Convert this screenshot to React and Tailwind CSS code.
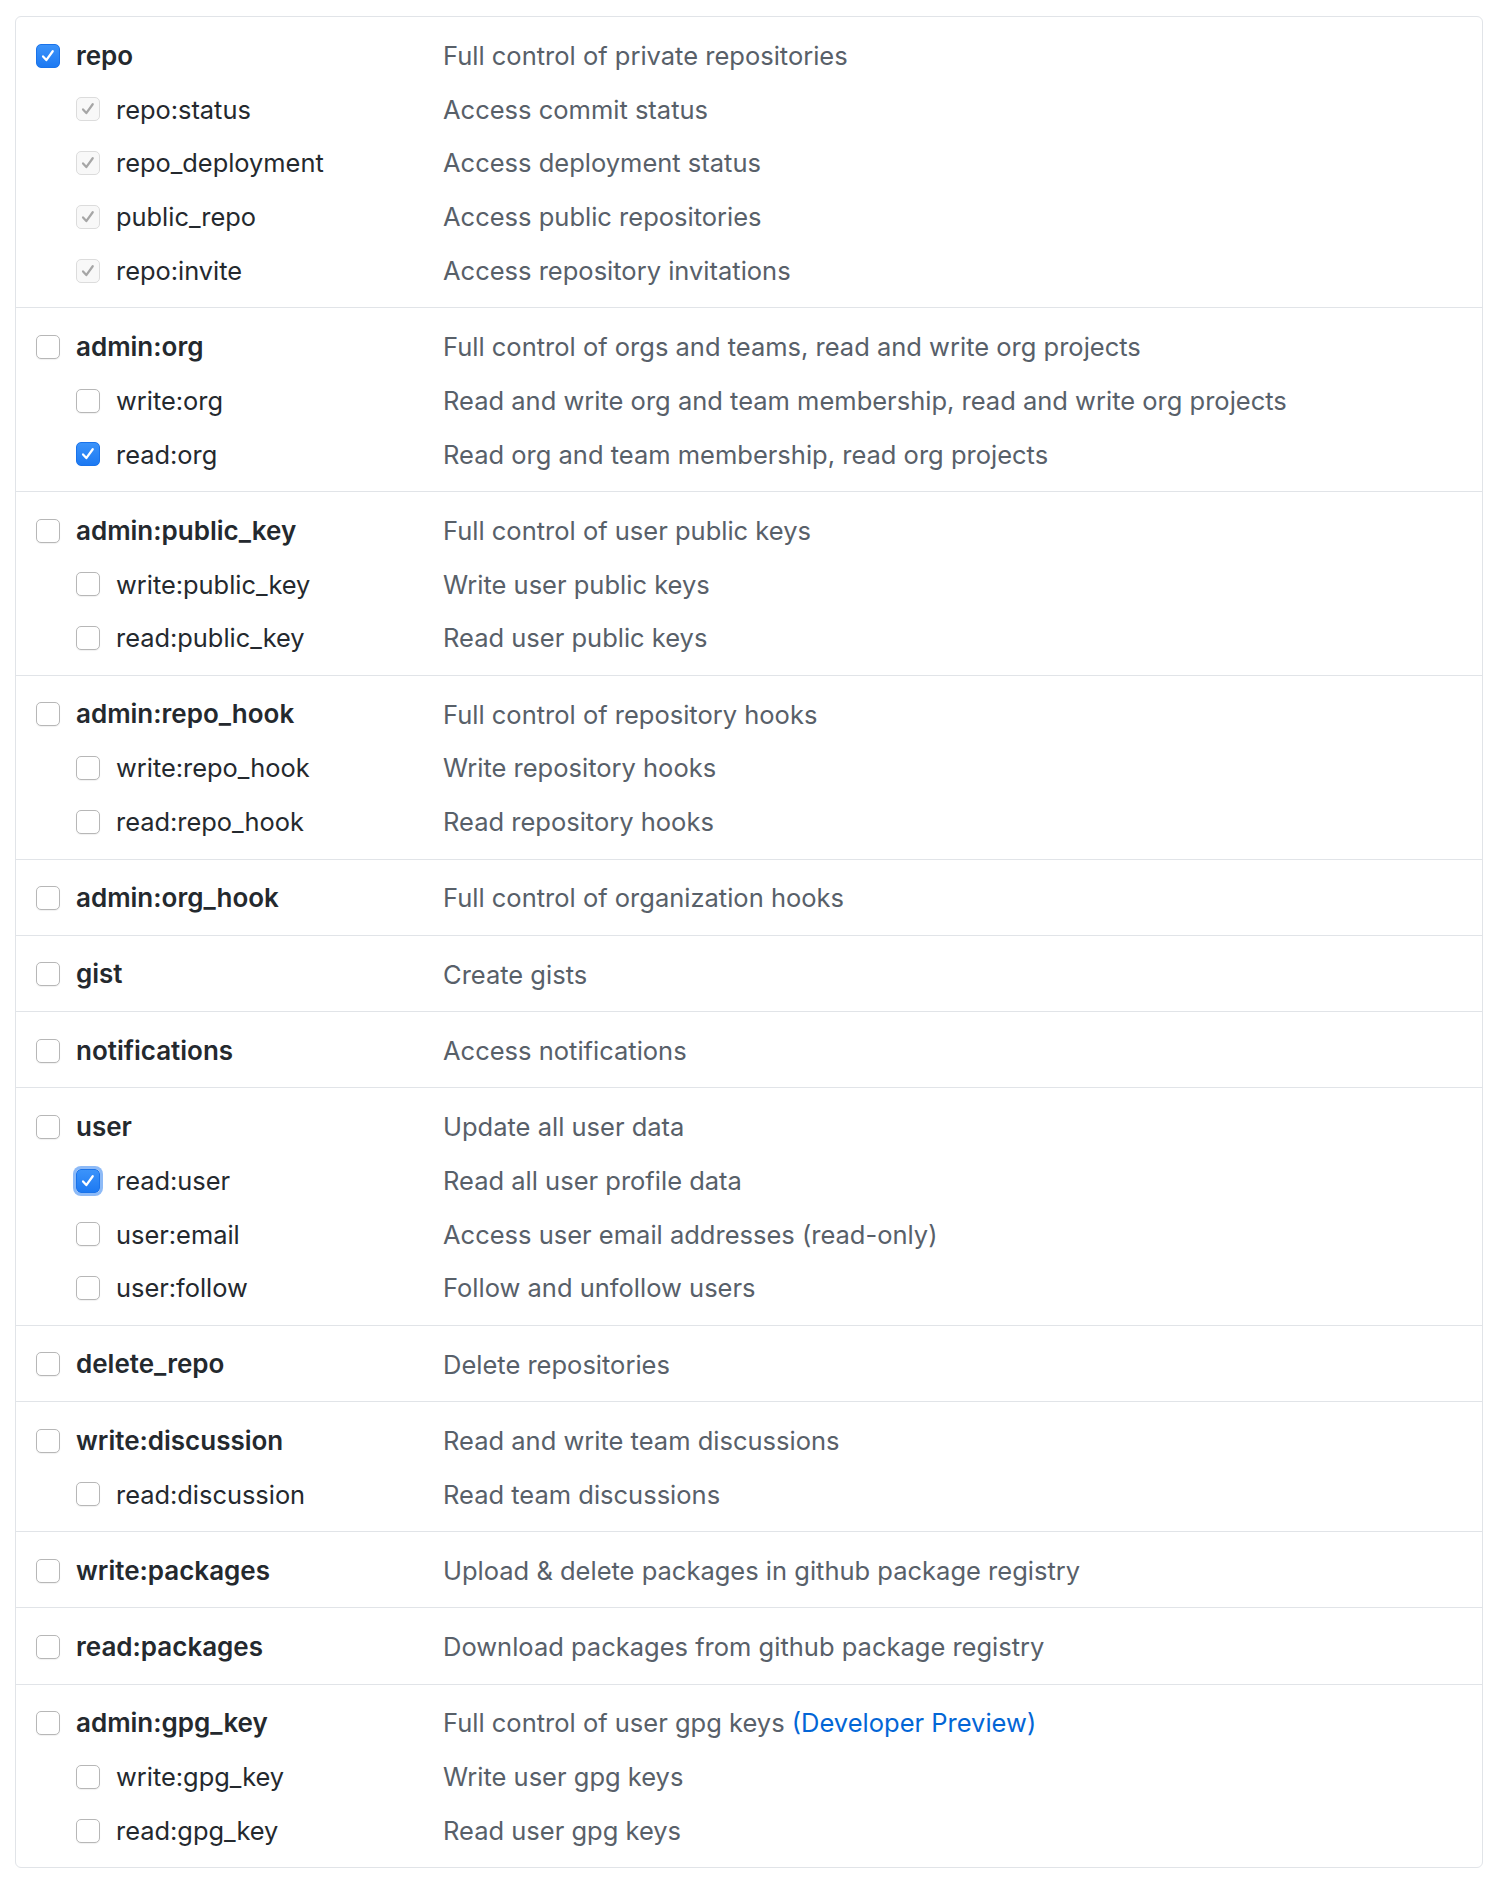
import React from "react";

const groups = [
  {
    name: "repo",
    desc: "Full control of private repositories",
    state: "checked",
    subs: [
      { name: "repo:status", desc: "Access commit status", state: "disabled" },
      { name: "repo_deployment", desc: "Access deployment status", state: "disabled" },
      { name: "public_repo", desc: "Access public repositories", state: "disabled" },
      { name: "repo:invite", desc: "Access repository invitations", state: "disabled" },
    ],
  },
  {
    name: "admin:org",
    desc: "Full control of orgs and teams, read and write org projects",
    subs: [
      { name: "write:org", desc: "Read and write org and team membership, read and write org projects" },
      { name: "read:org", desc: "Read org and team membership, read org projects", state: "checked" },
    ],
  },
  {
    name: "admin:public_key",
    desc: "Full control of user public keys",
    subs: [
      { name: "write:public_key", desc: "Write user public keys" },
      { name: "read:public_key", desc: "Read user public keys" },
    ],
  },
  {
    name: "admin:repo_hook",
    desc: "Full control of repository hooks",
    subs: [
      { name: "write:repo_hook", desc: "Write repository hooks" },
      { name: "read:repo_hook", desc: "Read repository hooks" },
    ],
  },
  { name: "admin:org_hook", desc: "Full control of organization hooks", subs: [] },
  { name: "gist", desc: "Create gists", subs: [] },
  { name: "notifications", desc: "Access notifications", subs: [] },
  {
    name: "user",
    desc: "Update all user data",
    subs: [
      { name: "read:user", desc: "Read all user profile data", state: "focus" },
      { name: "user:email", desc: "Access user email addresses (read-only)" },
      { name: "user:follow", desc: "Follow and unfollow users" },
    ],
  },
  { name: "delete_repo", desc: "Delete repositories", subs: [] },
  {
    name: "write:discussion",
    desc: "Read and write team discussions",
    subs: [{ name: "read:discussion", desc: "Read team discussions" }],
  },
  { name: "write:packages", desc: "Upload & delete packages in github package registry", subs: [] },
  { name: "read:packages", desc: "Download packages from github package registry", subs: [] },
  {
    name: "admin:gpg_key",
    desc: "Full control of user gpg keys",
    link: "(Developer Preview)",
    subs: [
      { name: "write:gpg_key", desc: "Write user gpg keys" },
      { name: "read:gpg_key", desc: "Read user gpg keys" },
    ],
  },
];

function Check({ color }) {
  return (
    <svg width="18" height="18" viewBox="0 0 16 16" fill="none">
      <path d="M3.6 8.4 L6.5 11.6 L12.2 3.8" stroke={color} strokeWidth="2" strokeLinecap="round" strokeLinejoin="round" />
    </svg>
  );
}

function Checkbox({ state }) {
  if (state === "checked" || state === "focus") {
    return (
      <span
        className={
          "flex items-center justify-center w-[24px] h-[24px] rounded-[5px] border border-[#1a73ea] bg-gradient-to-b from-[#3b93fa] to-[#1c79f2] shrink-0 " +
          (state === "focus" ? "ring-[3px] ring-[#8dbaf7]" : "")
        }
      >
        <Check color="#ffffff" />
      </span>
    );
  }
  if (state === "disabled") {
    return (
      <span className="flex items-center justify-center w-[24px] h-[24px] rounded-[5px] border border-[#dcdcdc] bg-[#f8f8f8] shrink-0">
        <Check color="#a6a6a6" />
      </span>
    );
  }
  return (
    <span className="block w-[24px] h-[24px] rounded-[5px] border border-[#b7b7b7] bg-white shadow-[0_1px_1px_rgba(0,0,0,0.06)] shrink-0" />
  );
}

function Row({ item, sub }) {
  return (
    <div className="flex items-center h-[53.75px] pt-[2px]">
      <div className={"flex items-center w-[427px] shrink-0 gap-[16px] " + (sub ? "pl-[60px]" : "pl-[20px]")}>
        <Checkbox state={item.state} />
        <span className={sub ? "text-[#24292e] text-[25.4px]" : "text-[#24292e] font-semibold text-[26px]"}>
          {item.name}
        </span>
      </div>
      <div className="text-[#586069] text-[25.5px]">
        {item.desc}
        {item.link && <span className="text-[#0366d6]"> {item.link}</span>}
      </div>
    </div>
  );
}

export default function App() {
  return (
    <div
      className="bg-white min-h-[1884px] pt-[16px] pl-[15px] leading-none"
      style={{ fontFamily: "Inter, 'Noto Sans', sans-serif" }}
    >
      <div className="w-[1468px] border border-[#e1e4e8] rounded-[6px]">
        {groups.map((g, i) => (
          <div key={g.name} className={"py-[10.75px] " + (i > 0 ? "border-t border-[#e1e4e8]" : "")}>
            <Row item={g} />
            {g.subs.map((s) => (
              <Row key={s.name} item={s} sub />
            ))}
          </div>
        ))}
      </div>
    </div>
  );
}
